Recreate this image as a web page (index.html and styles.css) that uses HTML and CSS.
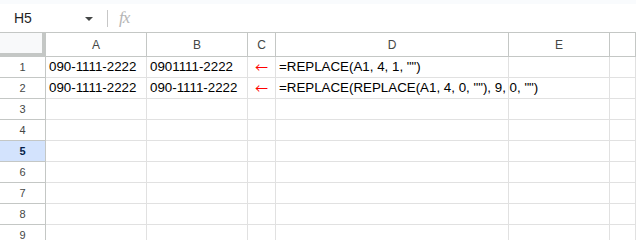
FILE: index.html
```html
<!DOCTYPE html>
<html lang="ja">
	<head>
		<meta http-equiv="Content-Type" content="text/html; charset=utf-8" />
		<title>REPLACE</title>
		<link rel="stylesheet" href="styles.css">
	</head>
	<body>
		<div class="topstrip"></div>
		<div class="formula-bar">
			<div class="name-box">
				<span class="cell-ref">H5</span>
				<span class="caret"></span>
			</div>
			<span class="divider"></span>
			<span class="fx">fx</span>
		</div>
		<div class="sheet">
			<!-- header row -->
			<div class="corner"></div>
			<div class="col-head">A</div>
			<div class="col-head">B</div>
			<div class="col-head">C</div>
			<div class="col-head">D</div>
			<div class="col-head">E</div>
			<div class="col-head"></div>

			<div class="row-head">1</div>
			<div class="cell">090-1111-2222</div>
			<div class="cell">0901111-2222</div>
			<div class="cell arrow">←</div>
			<div class="cell">=REPLACE(A1, 4, 1, "")</div>
			<div class="cell"></div>
			<div class="cell"></div>

			<div class="row-head">2</div>
			<div class="cell">090-1111-2222</div>
			<div class="cell">090-1111-2222</div>
			<div class="cell arrow">←</div>
			<div class="cell">=REPLACE(REPLACE(A1, 4, 0, ""), 9, 0, "")</div>
			<div class="cell"></div>
			<div class="cell"></div>

			<div class="row-head">3</div>
			<div class="cell"></div><div class="cell"></div><div class="cell"></div><div class="cell"></div><div class="cell"></div><div class="cell"></div>
			<div class="row-head">4</div>
			<div class="cell"></div><div class="cell"></div><div class="cell"></div><div class="cell"></div><div class="cell"></div><div class="cell"></div>
			<div class="row-head active">5</div>
			<div class="cell"></div><div class="cell"></div><div class="cell"></div><div class="cell"></div><div class="cell"></div><div class="cell"></div>
			<div class="row-head">6</div>
			<div class="cell"></div><div class="cell"></div><div class="cell"></div><div class="cell"></div><div class="cell"></div><div class="cell"></div>
			<div class="row-head">7</div>
			<div class="cell"></div><div class="cell"></div><div class="cell"></div><div class="cell"></div><div class="cell"></div><div class="cell"></div>
			<div class="row-head">8</div>
			<div class="cell"></div><div class="cell"></div><div class="cell"></div><div class="cell"></div><div class="cell"></div><div class="cell"></div>
			<div class="row-head">9</div>
			<div class="cell"></div><div class="cell"></div><div class="cell"></div><div class="cell"></div><div class="cell"></div><div class="cell"></div>
		</div>
	</body>
</html>
```

FILE: styles.css
```css
*{
	padding: 0;
	margin: 0;
	box-sizing: border-box;
}
body{
	width: 636px;
	height: 240px;
	overflow: hidden;
	background: #fff;
	font-family: "Liberation Sans", Arial, sans-serif;
}
.topstrip{
	height: 4px;
	background: #f9fbfd;
}
.formula-bar{
	height: 29px;
	display: flex;
	align-items: center;
	border-bottom: 1px solid #c4c7c5;
}
.name-box{
	width: 107px;
	display: flex;
	align-items: center;
	padding-left: 14px;
}
.cell-ref{
	font-size: 14px;
	color: #1f1f1f;
	flex: 1;
}
.caret{
	width: 0;
	height: 0;
	border-left: 4px solid transparent;
	border-right: 4px solid transparent;
	border-top: 4px solid #444746;
	margin-right: 14px;
	margin-top: 1px;
}
.divider{
	width: 1px;
	height: 17px;
	background: #c7c7c7;
}
.fx{
	margin-left: 11px;
	font-family: "Liberation Serif", serif;
	font-style: italic;
	font-size: 17px;
	color: #b5b5b5;
	letter-spacing: -1px;
}
.sheet{
	display: grid;
	grid-template-columns: 46px 101px 101px 28px 233px 101px 1fr;
	grid-template-rows: 24px;
	grid-auto-rows: 21px;
}
.sheet > div{
	border-right: 1px solid #e1e1e1;
	border-bottom: 1px solid #e1e1e1;
}
.corner{
	background: #f8f9fa;
	border-right: 4px solid #c4c7c5 !important;
	border-bottom: 4px solid #c4c7c5 !important;
}
.sheet > .col-head{
	border-right: 1px solid #c4c7c5;
	border-bottom: 1px solid #c4c7c5;
	font-size: 12px;
	color: #444746;
	display: flex;
	align-items: center;
	justify-content: center;
	padding-top: 1px;
}
.sheet > .row-head{
	border-right: 1px solid #c4c7c5;
	border-bottom: 1px solid #c4c7c5;
	font-size: 11px;
	color: #444746;
	display: flex;
	align-items: center;
	justify-content: center;
}
.sheet > .row-head.active{
	background: #d3e3fd;
	color: #041e49;
	font-weight: bold;
}
.cell{
	font-size: 10pt;
	color: #000;
	line-height: 20px;
	padding-left: 3px;
	white-space: nowrap;
	overflow: visible;
}
.cell.arrow{
	font-family: "Noto Sans CJK JP", sans-serif;
	font-size: 13px;
	color: #ff0000;
	text-align: center;
	padding-left: 0;
}
```
